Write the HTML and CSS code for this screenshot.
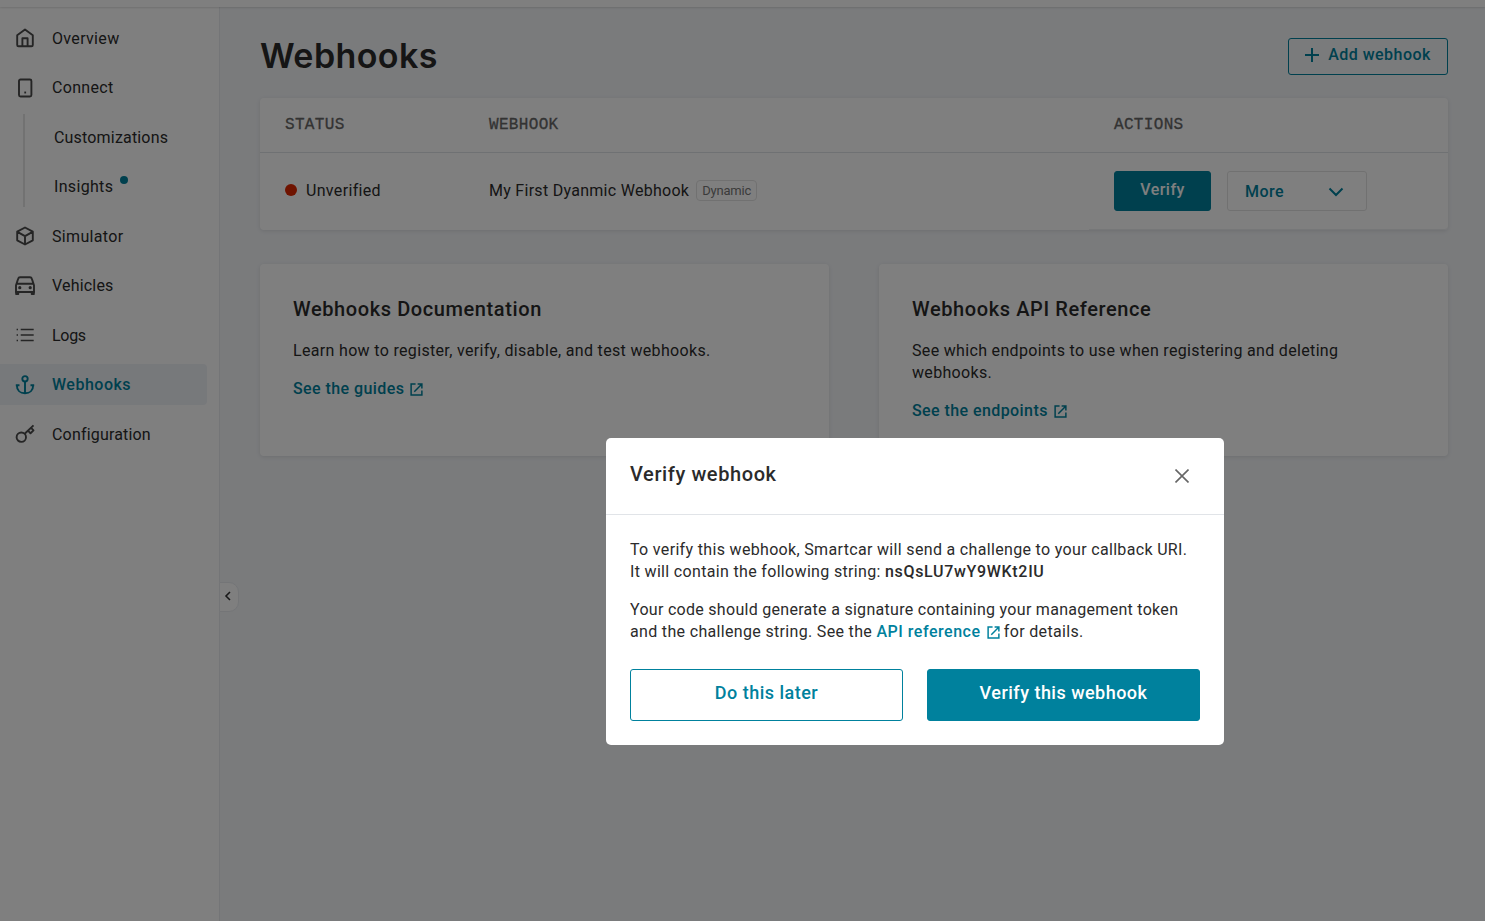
FILE: index.html
```html
<!DOCTYPE html>
<html lang="en">
<head>
  <meta charset="UTF-8" />
  <meta name="viewport" content="width=device-width, initial-scale=1.0"/>
  <title>Webhooks</title>
  <link rel="stylesheet" href="styles.css">
</head>
<body>

  <svg class="sprite" aria-hidden="true">
    <symbol id="external" viewBox="0 0 14 14">
      <path d="M6 1.2H1.2v11.6h11.6V8M8.2 1.2h4.6v4.6M12.6 1.4 4.6 9.4"/>
    </symbol>
  </svg>

  <header class="topbar"></header>

  <div class="layout">
    <nav class="sidebar">
      <a class="nav-item">
        <svg class="icon" viewBox="0 0 20 20"><path d="M2.200 7.200 10 1.500l7.800 5.700v9.700a1.300 1.300 0 0 1-1.300 1.300h-13a1.300 1.300 0 0 1-1.300-1.300zM7.400 18v-7.800h5.200V18"/></svg>
        <span>Overview</span>
      </a>
      <a class="nav-item">
        <svg class="icon" viewBox="0 0 20 20"><rect x="4" y="1.500" width="12.400" height="17" rx="1.500"/><path d="M9.300 14.500h1.800"/></svg>
        <span>Connect</span>
      </a>
      <div class="subnav">
        <a class="nav-item"><span class="tight">Customizations</span></a>
        <a class="nav-item"><span>Insights</span><i class="new-dot"></i></a>
      </div>
      <a class="nav-item">
        <svg class="icon" viewBox="0 0 20 20"><path d="M10 1.500 17.800 5.700v8.600L10 18.500l-7.800-4.200V5.700zM2.400 5.900 10 10.200l7.600-4.300M10 10.200v8"/></svg>
        <span>Simulator</span>
      </a>
      <a class="nav-item">
        <svg class="icon" viewBox="0 0 20 20"><path d="M1 16V9.200L3.200 2.600Q3.600 1.300 5 1.300h10q1.400 0 1.800 1.300L19 9.200V16zM1.600 7.800h16.800"/><path class="solid" d="M.2 15h4v3.300a.8.8 0 0 1-.8.8H1a.8.8 0 0 1-.8-.8zM15.800 15h4v3.300a.8.8 0 0 1-.8.8h-2.400a.8.8 0 0 1-.8-.8z"/><circle class="solid" cx="4.800" cy="11.700" r="1.600"/><circle class="solid" cx="15.200" cy="11.700" r="1.600"/></svg>
        <span class="tight">Vehicles</span>
      </a>
      <a class="nav-item">
        <svg class="icon thin" viewBox="0 0 20 20"><path d="M5.700 4.500h13M5.700 10h13M5.700 15.500h13M1.600 4.500H3M1.600 10H3M1.600 15.500H3"/></svg>
        <span class="tighter">Logs</span>
      </a>
      <a class="nav-item active">
        <svg class="icon" viewBox="0 0 20 20"><circle cx="10" cy="3.800" r="2.700"/><path d="M10 6.500v12.200M1.800 10c0 5.400 3.400 8.300 8.200 8.300s8.200-2.900 8.200-8.300M.8 10.200h3.700M15.500 10.200h3.700"/></svg>
        <span>Webhooks</span>
      </a>
      <a class="nav-item">
        <svg class="icon" viewBox="0 0 20 20"><circle cx="6.300" cy="13.200" r="4.700"/><path d="m9.700 9.800 8.800-8.400M13 6.700l2.500 2.600 3-2.900-2.600-2.700"/></svg>
        <span class="tight">Configuration</span>
      </a>
      <button class="collapse" aria-label="Collapse">
        <svg viewBox="0 0 8 10"><path d="M6 1 2 5l4 4"/></svg>
      </button>
    </nav>

    <main class="content">
      <div class="page-head">
        <h1>Webhooks</h1>
        <button class="btn add-btn">
          <svg viewBox="0 0 14 14"><path d="M7 0v14M0 7h14"/></svg>
          <span>Add webhook</span>
        </button>
      </div>

      <section class="table panel">
        <div class="row head">
          <div>STATUS</div>
          <div>WEBHOOK</div>
          <div>ACTIONS</div>
        </div>
        <div class="row">
          <div class="status"><i class="status-dot"></i><span>Unverified</span></div>
          <div class="name"><span>My First Dyanmic Webhook</span><span class="badge">Dynamic</span></div>
          <div class="actions">
            <button class="btn primary verify">Verify</button>
            <button class="btn more"><span>More</span>
              <svg viewBox="0 0 16 10"><path d="m1.500 1.500 6.500 6.500 6.500-6.500"/></svg>
            </button>
          </div>
        </div>
      </section>

      <div class="cards">
        <section class="card panel">
          <h2>Webhooks Documentation</h2>
          <p>Learn how to register, verify, disable, and test webhooks.</p>
          <a class="link">See the guides<svg class="ext"><use href="#external"/></svg></a>
        </section>
        <section class="card panel">
          <h2>Webhooks API Reference</h2>
          <p>See which endpoints to use when registering and deleting<br>webhooks.</p>
          <a class="link">See the endpoints<svg class="ext"><use href="#external"/></svg></a>
        </section>
      </div>
    </main>
  </div>

  <div class="overlay">
    <div class="modal" role="dialog">
      <div class="modal-head">
        <h2>Verify webhook</h2>
        <svg class="close" viewBox="0 0 14 14"><path d="m.5.5 13 13M13.500.5l-13 13"/></svg>
      </div>
      <div class="modal-body">
        <p>To verify this webhook, Smartcar will send a challenge to your callback URI.<br>It will contain the following string: <b>nsQsLU7wY9WKt2IU</b></p>
        <p><span class="narrow">Your code should generate a signature containing your management token</span><br>and the challenge string. See the <a class="link">API reference<svg class="ext"><use href="#external"/></svg></a> for details.</p>
        <div class="modal-actions">
          <button class="btn">Do this later</button>
          <button class="btn primary">Verify this webhook</button>
        </div>
      </div>
    </div>
  </div>

</body>
</html>
```
FILE: styles.css
```css
* {
  box-sizing: border-box;
}

body {
  margin: 0;
  height: 100vh;
  display: flex;
  flex-direction: column;
  overflow: hidden;
  font-family: Roboto, "Noto Sans", sans-serif;
  font-size: 16px;
  line-height: 22px;
  letter-spacing: 0.33px;
  color: #2b2b2b;
  background: #f4f6f9;
}

h1, h2, p {
  margin: 0;
}

svg {
  fill: none;
  stroke: currentColor;
  stroke-width: 1.6;
  flex: none;
}

.sprite {
  display: none;
}

.topbar {
  flex: 0 0 7px;
  background: #fff;
  box-shadow: 0 1px 2px rgba(0, 0, 0, 0.12);
  z-index: 1;
}

.layout {
  flex: 1;
  display: flex;
}

/* sidebar */
.sidebar {
  position: relative;
  width: 220px;
  padding-top: 10.5px;
  background: #fff;
  border-right: 1px solid #e8ebef;
}

.nav-item {
  display: flex;
  align-items: center;
  width: 207px;
  height: 41px;
  margin-bottom: 8.5px;
  padding-left: 15px;
  gap: 17px;
  border-radius: 0 4px 4px 0;
}

.nav-item span {
  padding-top: 1px;
}

.nav-item .tight {
  letter-spacing: 0.18px;
}

.nav-item .tighter {
  letter-spacing: -0.3px;
}

.icon {
  width: 20px;
  height: 20px;
  color: #4a4a4a;
  stroke-width: 1.9;
  stroke-linejoin: round;
}

.icon.thin {
  stroke-width: 1.6;
}

.icon .solid {
  fill: currentColor;
  stroke: none;
}

.nav-item.active {
  background: #eff2f6;
  color: #00819d;
  font-weight: 500;
  letter-spacing: 0.5px;
}

.nav-item.active span {
  padding-top: 0;
}

.active .icon {
  color: #00819d;
}

.subnav {
  margin: -2.5px 0 8.5px 23px;
  padding-top: 2.5px;
  border-left: 2px solid #e4e4e4;
}

.subnav .nav-item {
  width: auto;
  padding-left: 29px;
  gap: 7px;
}

.subnav .nav-item:last-child {
  margin-bottom: 0;
}

.new-dot {
  width: 8px;
  height: 8px;
  margin-bottom: 13px;
  border-radius: 50%;
  background: #00819d;
}

.collapse {
  position: absolute;
  left: 219px;
  top: 575px;
  width: 20px;
  height: 30px;
  padding: 0 2px 2px 0;
  display: flex;
  align-items: center;
  justify-content: center;
  border: 1px solid #e8ebef;
  border-radius: 0 10px 10px 0;
  background: #fff;
  color: #333;
}

.collapse svg {
  width: 8px;
  height: 10px;
}

/* content */
.content {
  flex: 1;
  padding: 31px 37px 0 40px;
}

.page-head {
  display: flex;
  justify-content: space-between;
  height: 60px;
}

h1 {
  font-family: Inter, sans-serif;
  font-size: 34px;
  font-weight: 600;
  line-height: 36px;
  letter-spacing: 0.4px;
}

.btn {
  display: flex;
  align-items: center;
  justify-content: center;
  font: 500 16px/22px Roboto, sans-serif;
  letter-spacing: 0.48px;
  color: #00819d;
  background: none;
  border: 1px solid #00819d;
  border-radius: 3px;
}

.btn.primary {
  color: #fff;
  background: #00819d;
}

.add-btn {
  width: 160px;
  height: 37px;
  gap: 9px;
  padding: 0 0 3px;
}

.add-btn svg {
  width: 14px;
  height: 14px;
  stroke-width: 2;
}

.panel {
  background: #fff;
  border-radius: 4px;
  box-shadow: 0 1px 4px rgba(0, 0, 0, 0.1);
}

.row {
  display: grid;
  grid-template-columns: 204px 600px 1fr;
  height: 77px;
  padding-left: 25px;
}

.row > div {
  display: flex;
  align-items: center;
}

.row.head {
  height: 55px;
  padding-bottom: 1px;
  border-bottom: 1px solid #dfe2e6;
  font-family: "Liberation Mono", monospace;
  letter-spacing: 0.33px;
  color: #666;
  -webkit-text-stroke: 0.3px #666;
}

.row.head div:last-child {
  padding-left: 25px;
}

.row .status {
  gap: 9px;
  padding-bottom: 2px;
}

.status-dot {
  width: 12px;
  height: 12px;
  margin-bottom: 2px;
  border-radius: 50%;
  background: #de2600;
}

.row .name {
  gap: 8px;
  padding-bottom: 1px;
  letter-spacing: 0.28px;
}

.badge {
  height: 21px;
  margin: 0 0 2px -1px;
  padding: 0 5px;
  border: 1px solid #e2e2e2;
  border-radius: 4px;
  font-size: 13px;
  line-height: 19px;
  letter-spacing: -0.2px;
  color: #777;
}

.row .actions {
  gap: 16px;
  padding: 0 0 1px 25px;
  border-bottom: 1px solid #eceef1;
  border-radius: 0 0 4px 0;
}

.verify {
  width: 97px;
  height: 40px;
  padding: 0 0 2px;
}

.more {
  width: 140px;
  height: 40px;
  justify-content: space-between;
  padding: 2px 22px 0 17px;
  border-color: #e2e2e2;
}

.more svg {
  width: 16px;
  height: 10px;
  stroke-width: 2;
}

.cards {
  display: grid;
  grid-template-columns: 1fr 1fr;
  gap: 50px;
  margin-top: 34px;
}

.card {
  height: 192px;
  padding: 32px 33px;
}

h2 {
  font-size: 20px;
  font-weight: 500;
  line-height: 26px;
  letter-spacing: 0.6px;
}

.card p {
  margin: 18px 0 16px;
}

.link {
  color: #00819d;
  font-weight: 500;
  letter-spacing: 0.42px;
}

.ext {
  width: 13px;
  height: 13px;
  margin-left: 6px;
  vertical-align: -1.5px;
}

/* verify dialog */
.overlay {
  position: fixed;
  inset: 0;
  z-index: 10;
  background: rgba(0, 0, 0, 0.5);
}

.modal {
  position: absolute;
  left: 606px;
  top: 438px;
  width: 618px;
  height: 307px;
  border-radius: 5px;
  background: #fff;
}

.modal-head {
  display: flex;
  align-items: center;
  justify-content: space-between;
  height: 77px;
  padding: 0 35px 4px 24px;
  border-bottom: 1px solid #e1e4e8;
}

.close {
  width: 14px;
  height: 14px;
  margin-top: 3px;
  color: #666;
}

.modal-body {
  padding: 24px 24px 24px;
}

.modal-body p {
  margin-bottom: 16px;
  white-space: nowrap;
}

.modal-body .narrow {
  letter-spacing: 0.29px;
}

.modal-body .link {
  letter-spacing: 0.52px;
}

.modal-body b {
  font-weight: 500;
  letter-spacing: 0.68px;
}

.modal-actions {
  display: grid;
  grid-template-columns: 1fr 1fr;
  gap: 24px;
  padding-top: 10px;
}

.modal-actions .btn {
  height: 52px;
  padding: 0 0 5px;
  font-size: 18px;
}
```
